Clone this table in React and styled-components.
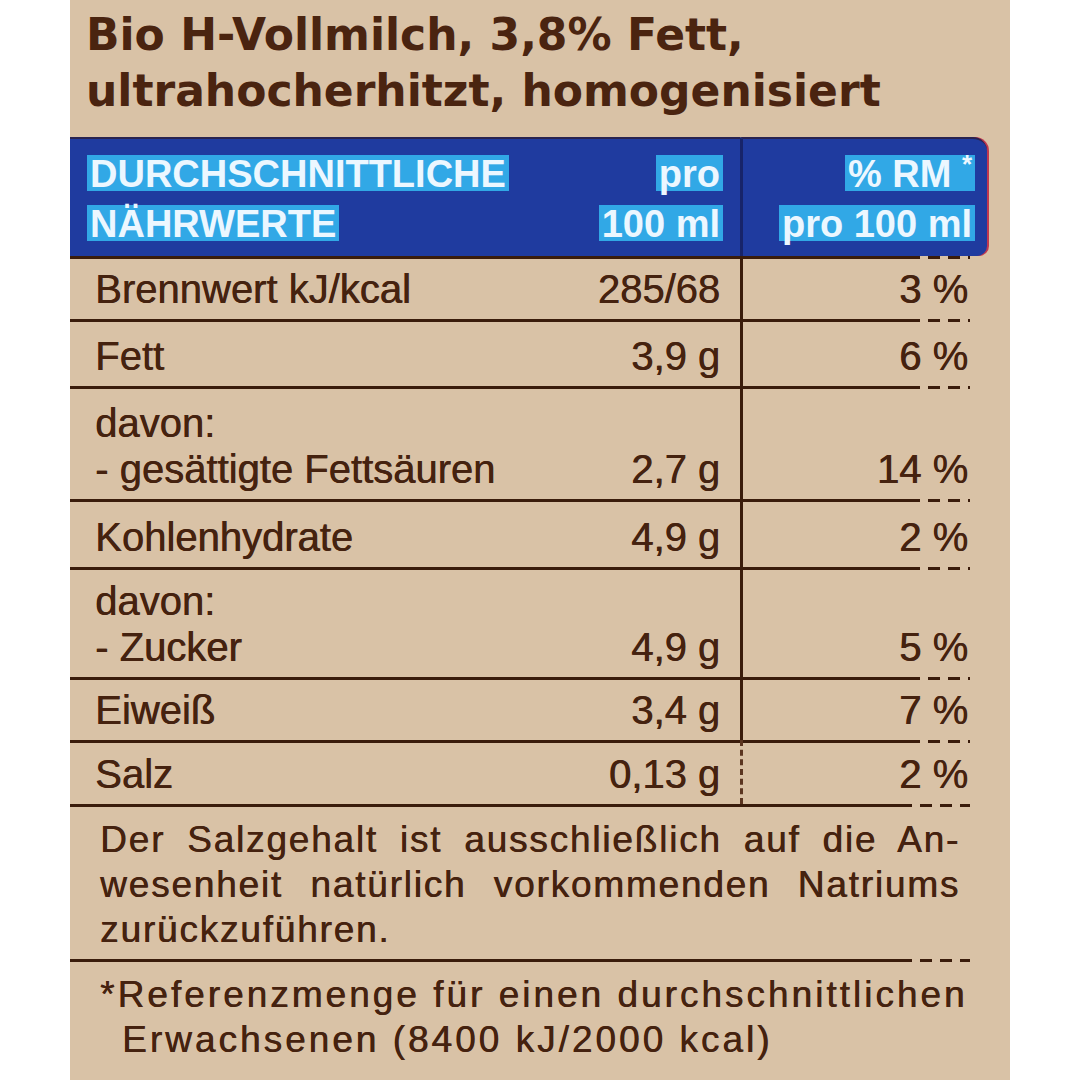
import React from 'react';
import styled, { createGlobalStyle } from 'styled-components';

const ink = '#45220f';
const rule = '#3a1c0b';

const GlobalStyle = createGlobalStyle`
  html, body { margin: 0; padding: 0; background: #fff; }
  body { font-family: "Liberation Sans", Arial, sans-serif; }
`;

const Page = styled.div`
  width: 1080px;
  height: 1080px;
  display: flex;
  background: #fff;
  overflow: hidden;
`;

const Label = styled.main`
  width: 940px;
  margin-left: 70px;
  background: #d9c2a6;
  color: ${ink};
  display: flex;
  flex-direction: column;
`;

const Title = styled.h1`
  margin: 7px 0 18px;
  padding-left: 16px;
  font-family: "DejaVu Sans", sans-serif;
  font-weight: 700;
  font-size: 44px;
  line-height: 56px;
  color: #4a2410;
`;

const Table = styled.div`
  width: 917px;
  display: flex;
  flex-direction: column;
`;

const Row = styled.div`
  display: grid;
  grid-template-columns: 1fr auto 247px;
  height: ${p => p.$h}px;
  font-size: 40px;
  line-height: 46px;
  text-shadow: 0.6px 0 0 currentColor;
`;

const HeadRow = styled(Row)`
  height: 119px;
  font-weight: 700;
  font-size: 38px;
  line-height: 50px;
  text-shadow: none;
`;

const HeadCell = styled.div`
  background: #1f3b9f;
  border-top: 2px solid #2a2350;
  padding: 10px ${p => p.$pr || 0}px 0 ${p => p.$pl || 0}px;
  text-align: ${p => p.$align || 'left'};
  display: flex;
  flex-direction: column;
  align-items: ${p => (p.$align === 'right' ? 'flex-end' : 'flex-start')};
`;

const HeadShare = styled(HeadCell)`
  border-left: 3px solid #17246a;
  border-radius: 0 14px 10px 0;
  box-shadow: 2px 0 0 #c0384f;
`;

const Hl = styled.span`
  background: linear-gradient(#31a8e6, #31a8e6) 0 2px / 100% 36px no-repeat;
  padding: 0 3px;
  color: #ecf7ff;
  white-space: nowrap;
`;

const Star = styled.span`
  font-size: 26px;
  vertical-align: top;
  line-height: 30px;
`;

const Name = styled.div`
  border-top: 3px solid ${rule};
  padding: 0 0 7px 25px;
  display: flex;
  flex-direction: column;
  justify-content: flex-end;
`;

const Amount = styled.div`
  border-top: 3px solid ${rule};
  padding: 0 20px 7px 0;
  display: flex;
  align-items: flex-end;
  justify-content: flex-end;
`;

const Share = styled.div`
  border-left: 3px ${p => (p.$dashed ? 'dashed' : 'solid')} ${p => (p.$dashed ? '#5b3520' : rule)};
  padding: 3px 19px 7px 0;
  display: flex;
  align-items: flex-end;
  justify-content: flex-end;
  background:
    linear-gradient(${rule}, ${rule}) 0 0 / 165px 3px no-repeat,
    repeating-linear-gradient(to right, ${rule} 0 12px, transparent 12px 20px) 165px 0 / 62px 3px no-repeat;
`;

const Note = styled.div`
  width: 900px;
  padding: ${p => p.$pt}px 50px 0 30px;
  height: ${p => p.$h}px;
  box-sizing: border-box;
  font-size: 37px;
  line-height: 45px;
  letter-spacing: ${p => p.$ls}px;
  text-shadow: 0.6px 0 0 currentColor;
  background:
    linear-gradient(${rule}, ${rule}) 0 0 / 830px 3px no-repeat,
    repeating-linear-gradient(to right, ${rule} 0 12px, transparent 12px 20px) 830px 0 / 70px 3px no-repeat;
`;

const Line = styled.div`
  white-space: nowrap;
  text-align: ${p => (p.$justify ? 'justify' : 'left')};
  text-align-last: ${p => (p.$justify ? 'justify' : 'left')};
  width: ${p => (p.$justify ? '860px' : 'auto')};
  padding-left: ${p => p.$indent || 0}px;
`;

const rows = [
  { h: 63, name: ['Brennwert kJ/kcal'], amount: '285/68', share: '3 %' },
  { h: 67, name: ['Fett'], amount: '3,9 g', share: '6 %' },
  { h: 113, name: ['davon:', '- gesättigte Fettsäuren'], amount: '2,7 g', share: '14 %' },
  { h: 68, name: ['Kohlenhydrate'], amount: '4,9 g', share: '2 %' },
  { h: 110, name: ['davon:', '- Zucker'], amount: '4,9 g', share: '5 %' },
  { h: 63, name: ['Eiweiß'], amount: '3,4 g', share: '7 %' },
  { h: 64, name: ['Salz'], amount: '0,13 g', share: '2 %', dashed: true },
];

export default function App() {
  return (
    <Page>
      <GlobalStyle />
      <Label>
        <Title>
          Bio H-Vollmilch, 3,8% Fett,<br />
          ultrahocherhitzt, homogenisiert
        </Title>
        <Table>
          <HeadRow>
            <HeadCell $pl={17}>
              <div><Hl>DURCHSCHNITTLICHE</Hl></div>
              <div><Hl>NÄHRWERTE</Hl></div>
            </HeadCell>
            <HeadCell $pr={17} $align="right">
              <div><Hl>pro</Hl></div>
              <div><Hl>100 ml</Hl></div>
            </HeadCell>
            <HeadShare $pr={12} $align="right">
              <div><Hl>% RM <Star>*</Star></Hl></div>
              <div><Hl>pro 100 ml</Hl></div>
            </HeadShare>
          </HeadRow>
          {rows.map(r => (
            <Row key={r.name.join()} $h={r.h}>
              <Name>
                {r.name.map(n => <div key={n}>{n}</div>)}
              </Name>
              <Amount>{r.amount}</Amount>
              <Share $dashed={r.dashed}>{r.share}</Share>
            </Row>
          ))}
        </Table>
        <Note $h={155} $pt={13} $ls={1.8}>
          <Line $justify>Der Salzgehalt ist ausschließlich auf die An-</Line>
          <Line $justify>wesenheit natürlich vorkommenden Natriums</Line>
          <Line>zurückzuführen.</Line>
        </Note>
        <Note $h={120} $pt={13} $ls={3}>
          <Line>*Referenzmenge für einen durchschnittlichen</Line>
          <Line $indent={22}>Erwachsenen (8400 kJ/2000 kcal)</Line>
        </Note>
      </Label>
    </Page>
  );
}
